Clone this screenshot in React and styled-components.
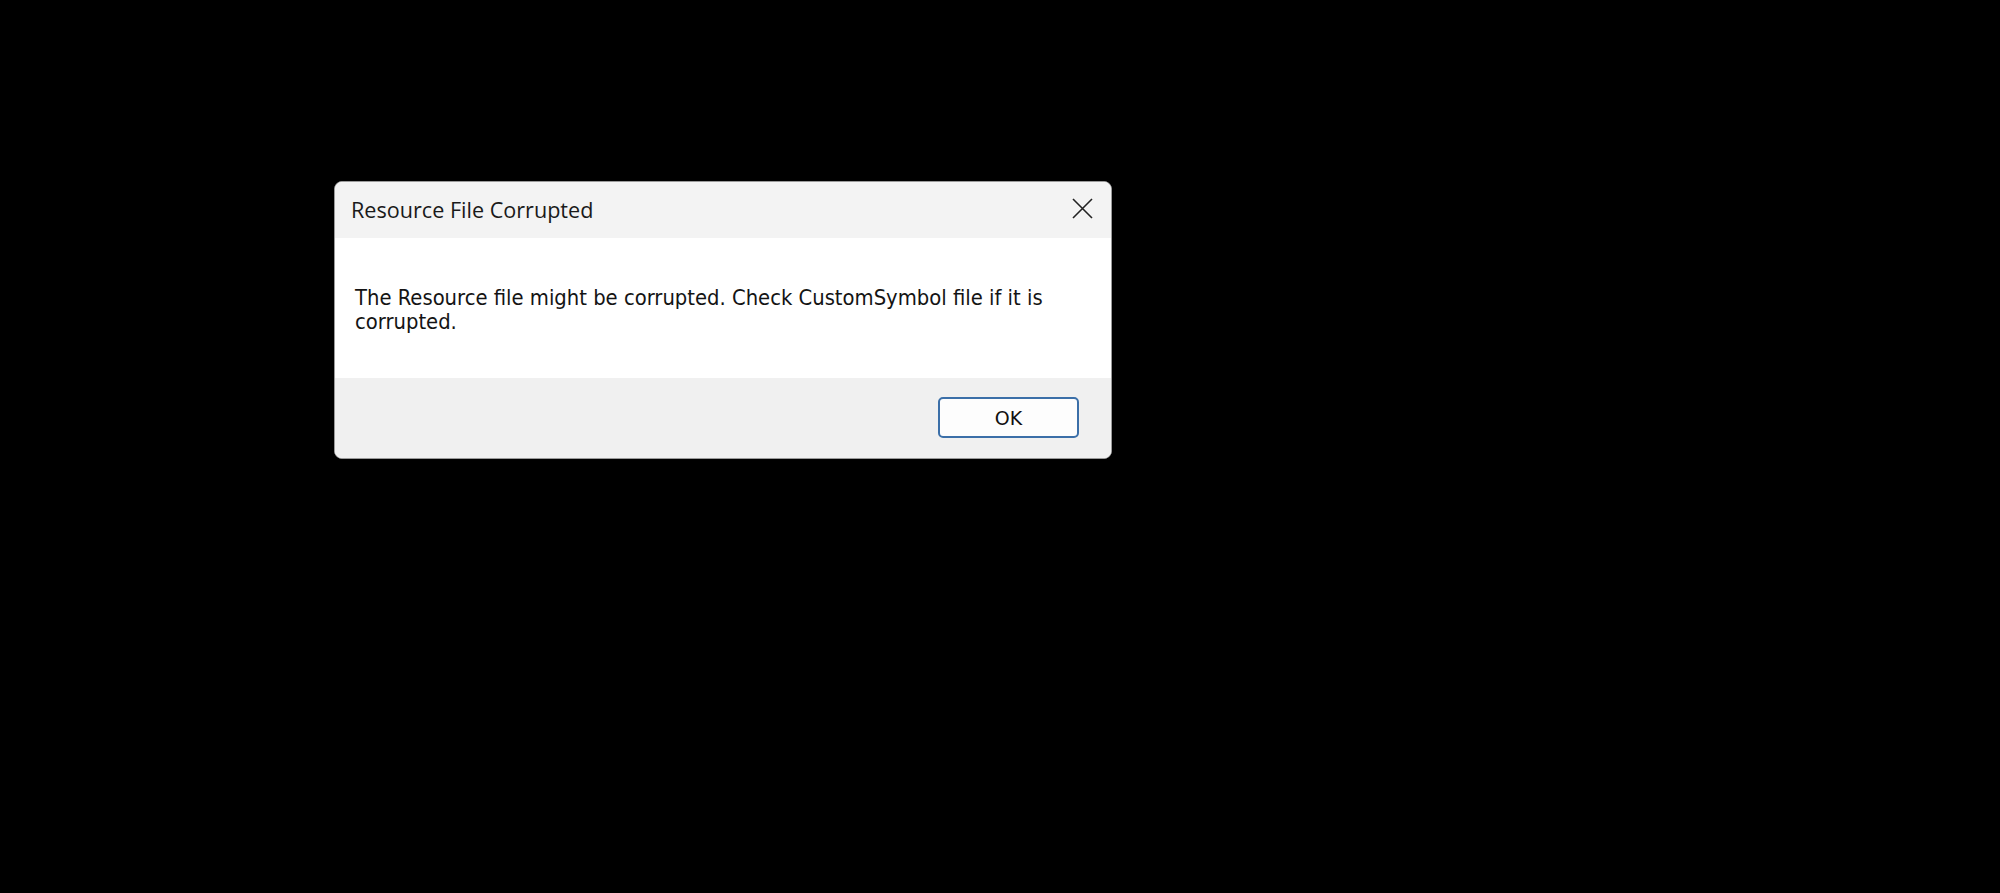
import React from 'react';
import styled, { createGlobalStyle } from 'styled-components';

const GlobalStyle = createGlobalStyle`
  html, body {
    margin: 0;
    padding: 0;
    background: #000;
  }
`;

const Page = styled.div`
  width: 2000px;
  height: 893px;
  background: #000;
  padding: 181px 0 0 334px;
  box-sizing: border-box;
`;

const Dialog = styled.div`
  width: 778px;
  border-radius: 8px;
  overflow: hidden;
  background: #fff;
  border: 1px solid #9a9a9a;
  box-sizing: border-box;
  display: flex;
  flex-direction: column;
`;

const TitleBar = styled.div`
  height: 56px;
  background: #f3f3f3;
  display: flex;
  align-items: center;
  justify-content: space-between;
  padding: 0 17px 0 16px;
`;

const Title = styled.div`
  font-family: "Open Sans", "Noto Sans", sans-serif;
  font-size: 21.6px;
  color: #1a1a1a;
  margin-top: -2px;
`;

const CloseButton = styled.button`
  background: none;
  border: none;
  padding: 0;
  width: 24px;
  height: 24px;
  display: flex;
  align-items: center;
  justify-content: center;
  margin-top: -3px;
`;

const Body = styled.div`
  height: 140px;
  background: #fff;
  padding: 48px 40px 0 20px;
  box-sizing: border-box;
  font-family: "DejaVu Sans Condensed", "DejaVu Sans", Verdana, sans-serif;
  font-size: 21.8px;
  line-height: 24px;
  color: #141414;
`;

const Footer = styled.div`
  height: 80px;
  background: #f0f0f0;
  display: flex;
  justify-content: flex-end;
  align-items: flex-start;
  padding: 19px 32px 0 0;
  box-sizing: border-box;
`;

const OkButton = styled.button`
  width: 141px;
  height: 41px;
  border: 2px solid #3b6fa8;
  border-radius: 5px;
  background: #fdfdfd;
  font-family: "DejaVu Sans", Verdana, sans-serif;
  font-size: 19px;
  color: #111;
  padding: 0;
`;

const App = () => {
  return (
    <>
      <GlobalStyle />
      <Page>
        <Dialog>
          <TitleBar>
            <Title>Resource File Corrupted</Title>
            <CloseButton aria-label="Close">
              <svg width="21" height="21" viewBox="0 0 21 21">
                <path d="M1 1 L20 20 M20 1 L1 20" stroke="#222" strokeWidth="1.6" />
              </svg>
            </CloseButton>
          </TitleBar>
          <Body>
            The Resource file might be corrupted. Check CustomSymbol file if it is corrupted.
          </Body>
          <Footer>
            <OkButton>OK</OkButton>
          </Footer>
        </Dialog>
      </Page>
    </>
  );
};

export default App;
